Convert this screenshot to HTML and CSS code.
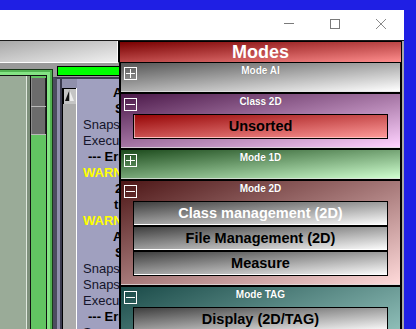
FILE: index.html
```html
<!DOCTYPE html>
<html>
<head>
<meta charset="utf-8">
<link rel="stylesheet" href="styles.css">
</head>
<body>
<div class="window">
  <div class="titlebar">
    <div class="tb-btn"><svg width="10" height="10" viewBox="0 0 10 10"><path d="M0 4.5h10" stroke="#7a7a7a"/></svg></div>
    <div class="tb-btn"><svg width="10" height="10" viewBox="0 0 10 10"><rect x=".5" y=".5" width="9" height="9" fill="none" stroke="#7a7a7a"/></svg></div>
    <div class="tb-btn"><svg width="10" height="10" viewBox="0 0 10 10"><path d="M0 0l10 10M10 0L0 10" stroke="#8a8a8a"/></svg></div>
  </div>
  <div class="app">
    <div class="leftcol">
      <div class="toolbar"></div>
      <div class="panels">
        <div class="gp">
          <div class="gpin">
            <div class="pale"></div>
            <div class="sep"></div>
            <div class="gscroll">
              <div class="thumb t1"></div>
              <div class="thumb t2"></div>
            </div>
          </div>
        </div>
        <div class="logcol">
          <div class="progress"></div>
          <div class="logframe">
            <div class="logbox">
              <div class="vscroll">
                <svg class="arrow" width="13" height="16" viewBox="0 0 13 16"><rect width="13" height="16" fill="#c4c4c4"/><path d="M0 .5h13M.5 0v16" stroke="#000"/><path d="M6.5 2L2 13h4.5z" fill="#111"/><path d="M6.5 2L11 13H6.5z" fill="#ececec"/></svg>
              </div>
              <div class="logtext">
                <div class="b ia">Autosave</div>
                <div class="b ib">Saving</div>
                <div>Snapshot</div>
                <div>Execution</div>
                <div class="b i1">--- Errors</div>
                <div class="w">WARNING</div>
                <div class="b ib">2 files</div>
                <div class="b ic">tiles</div>
                <div class="w">WARNING</div>
                <div class="b ia">Autosave</div>
                <div class="b ib">Saving</div>
                <div>Snapshot</div>
                <div>Snapshot</div>
                <div>Execution</div>
                <div class="b i1">--- Errors</div>
                <div>Snapshot</div>
              </div>
            </div>
          </div>
        </div>
      </div>
    </div>
    <div class="modes">
      <div class="modes-head">Modes</div>
      <section class="sec s-ai">
        <div class="sec-head">
          <svg class="sec-icon" viewBox="0 0 13 13"><rect x=".5" y=".5" width="12" height="12" fill="none" stroke="#fff"/><path d="M2 6.5h9M6.5 2v9" stroke="#fff"/></svg>
          <div class="sec-title">Mode AI</div>
        </div>
      </section>
      <section class="sec s-c2d">
        <div class="sec-head">
          <svg class="sec-icon" viewBox="0 0 13 13"><rect x=".5" y=".5" width="12" height="12" fill="none" stroke="#fff"/><path d="M2 6.5h9" stroke="#fff"/></svg>
          <div class="sec-title">Class 2D</div>
        </div>
        <div class="sec-body">
          <div class="btn red">Unsorted</div>
        </div>
      </section>
      <section class="sec s-1d">
        <div class="sec-head">
          <svg class="sec-icon" viewBox="0 0 13 13"><rect x=".5" y=".5" width="12" height="12" fill="none" stroke="#fff"/><path d="M2 6.5h9M6.5 2v9" stroke="#fff"/></svg>
          <div class="sec-title">Mode 1D</div>
        </div>
      </section>
      <section class="sec s-2d">
        <div class="sec-head">
          <svg class="sec-icon" viewBox="0 0 13 13"><rect x=".5" y=".5" width="12" height="12" fill="none" stroke="#fff"/><path d="M2 6.5h9" stroke="#fff"/></svg>
          <div class="sec-title">Mode 2D</div>
        </div>
        <div class="sec-body">
          <div class="btn light">Class management (2D)</div>
          <div class="btn">File Management (2D)</div>
          <div class="btn">Measure</div>
        </div>
      </section>
      <section class="sec s-tag">
        <div class="sec-head">
          <svg class="sec-icon" viewBox="0 0 13 13"><rect x=".5" y=".5" width="12" height="12" fill="none" stroke="#fff"/><path d="M2 6.5h9" stroke="#fff"/></svg>
          <div class="sec-title">Mode TAG</div>
        </div>
        <div class="sec-body">
          <div class="btn">Display (2D/TAG)</div>
          <div class="btn">Tag management</div>
          <div class="btn">Export (TAG)</div>
        </div>
      </section>
    </div>
    <div class="edge"></div>
  </div>
</div>
</body>
</html>
```
FILE: styles.css
```css
html, body {
  margin: 0;
  width: 416px;
  height: 329px;
  overflow: hidden;
}
body {
  background: #1f1fe4;
  font-family: "Liberation Sans", Arial, sans-serif;
}
.window {
  margin-top: 10px;
  width: 404px;
  height: 319px;
  background: #fff;
  overflow: hidden;
}
.titlebar {
  height: 30px;
  border-bottom: 1px solid #1a1a1a;
  display: flex;
  justify-content: flex-end;
  background: #fff;
}
.tb-btn {
  width: 46px;
  display: flex;
  align-items: center;
  justify-content: center;
  padding-bottom: 2px;
  box-sizing: border-box;
}
.tb-btn svg { display: block; }
.app {
  display: flex;
  height: 288px;
}
.leftcol {
  width: 119px;
  flex: none;
  display: flex;
  flex-direction: column;
  overflow: hidden;
}
.toolbar {
  height: 21px;
  flex: none;
  background: linear-gradient(to bottom right, #a8a8a8, #f0f0f0);
  border-bottom: 1px solid #fff;
  border-right: 1px solid #000;
  box-shadow: inset -1px 0 0 #fff;
}
.panels {
  flex: 1;
  min-height: 0;
  display: flex;
  background: #9a9a9a;
}
.gp {
  width: 53px;
  flex: none;
  box-sizing: border-box;
  margin-top: 6px;
  border-top: 1px solid #183818;
  border-right: 1px solid #183818;
  padding: 5px 5px 0 0;
  background: #84e484;
  box-shadow: inset -2px 2px 0 #52b452;
  display: flex;
}
.gpin {
  flex: 1;
  display: flex;
  border-top: 1px solid #111;
  border-right: 1px solid #111;
}
.pale {
  width: 26px;
  background: #9aab98;
  border-right: 1px solid #dfe8de;
}
.sep {
  width: 3px;
  background: #7f917d;
}
.gscroll {
  width: 15px;
  border-left: 1px solid #111;
  background: #62c462;
  padding-top: 2px;
}
.thumb {
  background: #6c6c6c;
  border-bottom: 1px solid #b8b8b8;
  box-shadow: inset 1px 0 0 #8c8c8c, inset -1px 0 0 #222;
}
.t1 { height: 28px; }
.t2 { height: 27px; }
.logcol {
  flex: 1;
  min-width: 0;
  display: flex;
  flex-direction: column;
}
.progress {
  height: 8px;
  flex: none;
  margin: 3px 0 1px 4px;
  border: 1px solid #000;
  border-right: none;
  background: #00ff00;
}
.logframe {
  flex: 1;
  min-height: 0;
  display: flex;
  border-top: 2px solid #3c3c50;
  border-left: 4px solid #4c4c60;
  background: #9090ac;
  padding-left: 3px;
}
.logbox {
  flex: 1;
  min-width: 0;
  display: flex;
  border-left: 2px solid #3a3a4e;
}
.vscroll {
  width: 13px;
  flex: none;
  margin-top: 9px;
  border-left: 1px solid #000;
  border-right: 1px solid #fff;
  background: #acacac;
}
.arrow { display: block; }
.logtext {
  flex: 1;
  min-width: 0;
  overflow: hidden;
  background: #a0a0bf;
  padding: 6px 0 0 6px;
  font-size: 13px;
  line-height: 16px;
  color: #14142a;
  white-space: nowrap;
}
.b { font-weight: bold; color: #000; }
.w { font-weight: bold; color: #ffff00; }
.i1 { padding-left: 5px; }
.ia { padding-left: 30px; }
.ib { padding-left: 32px; }
.ic { padding-left: 31px; }
.modes {
  width: 283px;
  flex: none;
  box-sizing: border-box;
  background: #000;
  border-top: 1px solid #000;
  border-left: 1px solid #000;
  border-right: 1px solid #000;
  overflow: hidden;
}
.modes-head {
  height: 20px;
  line-height: 20px;
  margin-bottom: 1px;
  text-align: center;
  color: #fff;
  font-size: 18px;
  font-weight: bold;
  background: linear-gradient(to bottom right, #780000, #ff8e8e);
}
.sec {
  margin: 0 1px 2px;
  padding-bottom: 8px;
  border-bottom: 1px solid rgba(255, 255, 255, 0.75);
}
.sec-head {
  display: flex;
  height: 20px;
  padding: 0 3px;
}
.sec-head::after {
  content: "";
  width: 13px;
  flex: none;
}
.sec-icon {
  width: 13px;
  height: 13px;
  margin-top: 4px;
  flex: none;
  display: block;
}
.sec-title {
  flex: 1;
  text-align: center;
  color: #fff;
  font-size: 10px;
  font-weight: bold;
  line-height: 12px;
  padding-top: 2px;
  text-shadow: 0 0 1px rgba(0, 0, 0, 0.35);
}
.sec-body { padding: 0 12px; }
.s-ai { background: linear-gradient(to bottom right, #555555, #ffffff); }
.s-c2d { background: linear-gradient(to bottom right, #4a1848, #ffd2ff); }
.s-1d { background: linear-gradient(to bottom right, #1c4a1c, #cfffcf); }
.s-2d { background: linear-gradient(to bottom right, #4c1616, #ffdada); }
.s-tag { background: linear-gradient(to bottom right, #1a4a48, #bfeee6); }
.btn {
  height: 23px;
  line-height: 23px;
  border: 1px solid #000;
  text-align: center;
  font-size: 14.5px;
  font-weight: bold;
  color: #000;
  background: linear-gradient(to bottom right, #3e3e3e, #ffffff);
  box-shadow: inset 0 -1px 0 #fff;
}
.btn.red {
  background: linear-gradient(to bottom right, #960606, #ff9c9c);
  box-shadow: inset 1px 0 0 rgba(255, 255, 255, 0.5), inset 0 -1px 0 #ffc0c0;
}
.btn.light { color: #fff; }
.edge {
  width: 2px;
  flex: none;
  background: #a8a8a8;
}
```
